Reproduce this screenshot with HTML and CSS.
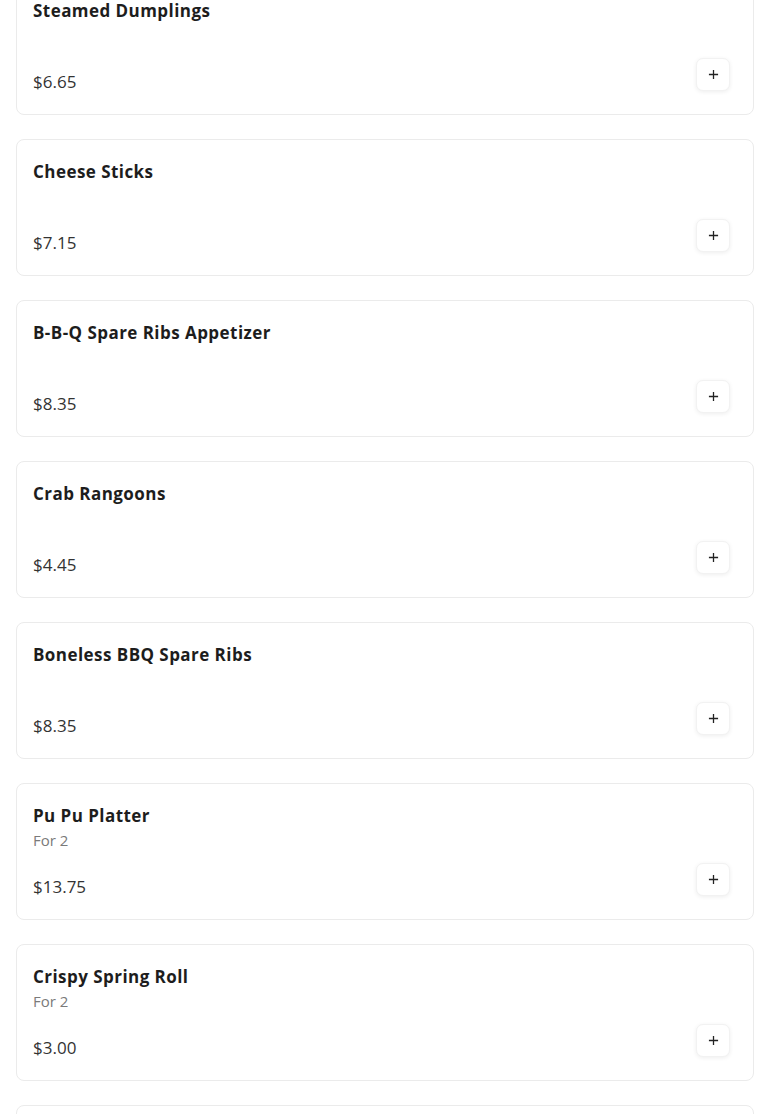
FILE: index.html
```html
<html>
  <head>
    <link rel="stylesheet" href="styles.css">
    <title>Menu - Appetizers</title>
  </head>
  <body>
    <div class="menu">
      <div class="item">
        <div class="name">Steamed Dumplings</div>
        <div class="desc"></div>
        <div class="bottom"><span class="price">$6.65</span><button class="add" aria-label="Add"><svg viewBox="0 0 12 12"><path d="M6 1v10M1 6h10"/></svg></button></div>
      </div>
      <div class="item">
        <div class="name">Cheese Sticks</div>
        <div class="desc"></div>
        <div class="bottom"><span class="price">$7.15</span><button class="add" aria-label="Add"><svg viewBox="0 0 12 12"><path d="M6 1v10M1 6h10"/></svg></button></div>
      </div>
      <div class="item">
        <div class="name">B-B-Q Spare Ribs Appetizer</div>
        <div class="desc"></div>
        <div class="bottom"><span class="price">$8.35</span><button class="add" aria-label="Add"><svg viewBox="0 0 12 12"><path d="M6 1v10M1 6h10"/></svg></button></div>
      </div>
      <div class="item">
        <div class="name">Crab Rangoons</div>
        <div class="desc"></div>
        <div class="bottom"><span class="price">$4.45</span><button class="add" aria-label="Add"><svg viewBox="0 0 12 12"><path d="M6 1v10M1 6h10"/></svg></button></div>
      </div>
      <div class="item">
        <div class="name">Boneless BBQ Spare Ribs</div>
        <div class="desc"></div>
        <div class="bottom"><span class="price">$8.35</span><button class="add" aria-label="Add"><svg viewBox="0 0 12 12"><path d="M6 1v10M1 6h10"/></svg></button></div>
      </div>
      <div class="item">
        <div class="name">Pu Pu Platter</div>
        <div class="desc">For 2</div>
        <div class="bottom"><span class="price">$13.75</span><button class="add" aria-label="Add"><svg viewBox="0 0 12 12"><path d="M6 1v10M1 6h10"/></svg></button></div>
      </div>
      <div class="item">
        <div class="name">Crispy Spring Roll</div>
        <div class="desc">For 2</div>
        <div class="bottom"><span class="price">$3.00</span><button class="add" aria-label="Add"><svg viewBox="0 0 12 12"><path d="M6 1v10M1 6h10"/></svg></button></div>
      </div>
      <div class="item"></div>
    </div>
  </body>
</html>
```
FILE: styles.css
```css
body {
  margin: 0;
  font-family: "Open Sans", sans-serif;
  background: #fff;
  color: #1d1d1d;
}

.menu {
  margin-top: -22px;
  padding: 0 16px;
  display: flex;
  flex-direction: column;
  gap: 24px;
}

.item {
  height: 137px;
  box-sizing: border-box;
  border: 1px solid #ebebeb;
  border-radius: 8px;
  padding: 20px 23px 21px 16px;
  display: flex;
  flex-direction: column;
}

.name {
  font-size: 17px;
  font-weight: 700;
  line-height: 24px;
  letter-spacing: 0.45px;
}

.desc {
  font-size: 15px;
  line-height: 22px;
  color: #7a7a7a;
  margin-top: 1px;
}

.bottom {
  margin-top: auto;
  display: flex;
  justify-content: space-between;
  align-items: flex-end;
}

.price {
  font-size: 17px;
  line-height: 22px;
  color: #333;
}

.add {
  width: 34px;
  height: 33px;
  padding: 0;
  margin-bottom: 2px;
  border: 1px solid #f2f2f2;
  border-radius: 7px;
  background: #fff;
  box-shadow: 0 1px 4px rgba(0, 0, 0, 0.07);
  display: flex;
  align-items: center;
  justify-content: center;
}

.add svg {
  width: 11px;
  height: 11px;
  stroke: #222;
  stroke-width: 1.4;
  fill: none;
}
```
